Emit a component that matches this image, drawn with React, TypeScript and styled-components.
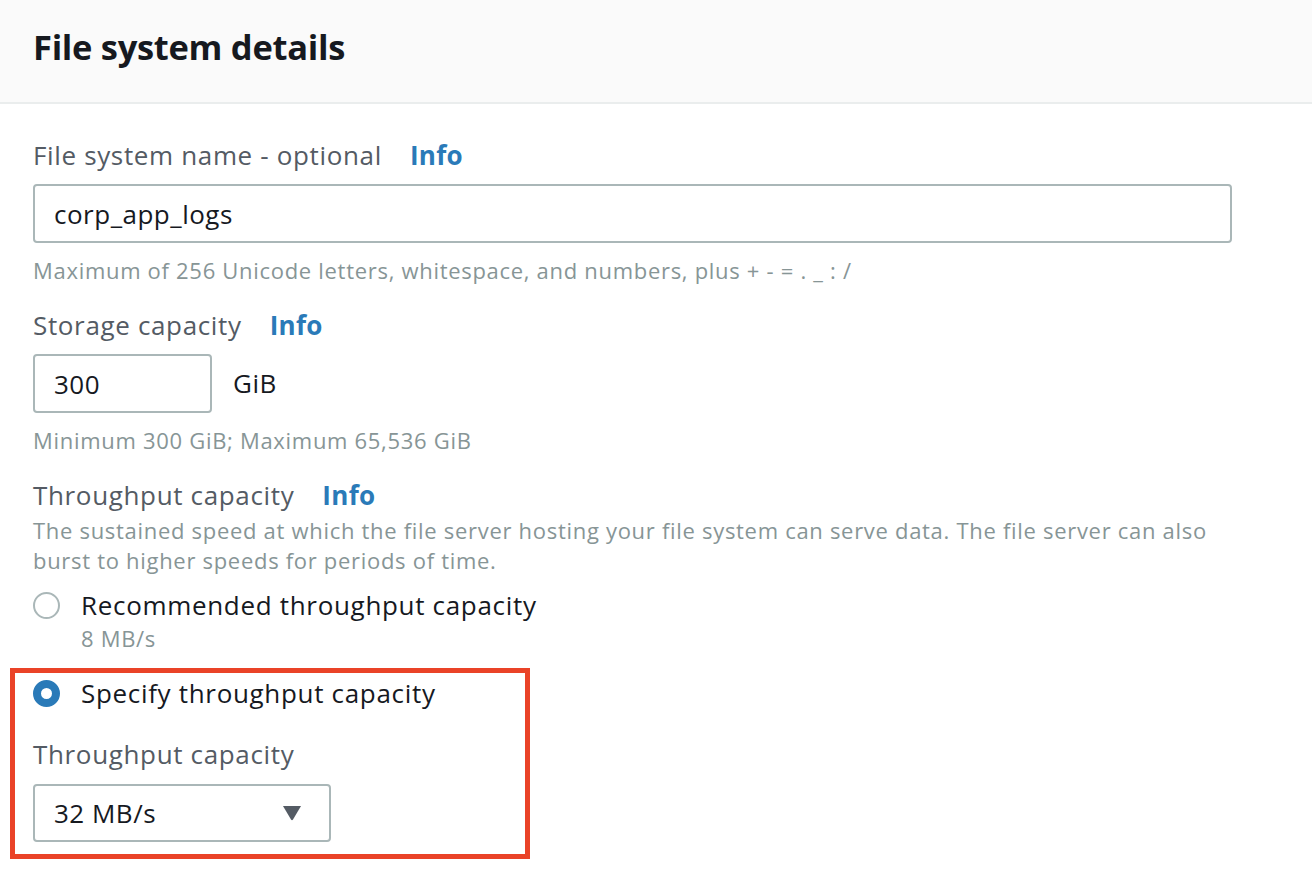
import React from "react";
import styled, { createGlobalStyle } from "styled-components";

const Global = createGlobalStyle`
  html, body { margin: 0; padding: 0; background: #ffffff; }
  body { font-family: "Open Sans", "Noto Sans", sans-serif; color: #16191f; }
  * { box-sizing: border-box; }
`;

const Page = styled.div`
  width: 1312px;
  height: 896px;
  overflow: hidden;
  background: #ffffff;
`;

const Header = styled.div`
  height: 104px;
  background: #fafafa;
  border-bottom: 2px solid #eaeded;
  padding: 0 33px 10px;
  display: flex;
  align-items: center;
`;

const Title = styled.h2`
  margin: 0;
  font-size: 34.5px;
  font-weight: 700;
  color: #16191f;
  letter-spacing: -0.3px;
`;

const Body = styled.div`
  padding: 33px 33px 0;
  display: flex;
  flex-direction: column;
`;

const Label = styled.div<{ $mt?: number }>`
  display: flex;
  align-items: center;
  gap: 28px;
  margin-top: ${(p) => p.$mt ?? 0}px;
  font-size: 26px;
  line-height: 36px;
  letter-spacing: 0.65px;
  color: #545b64;
`;

const InfoLink = styled.a`
  color: #2a7ab8;
  font-weight: 700;
  letter-spacing: 0.3px;
  text-decoration: none;
`;

const TextInput = styled.div<{ $w: number }>`
  margin-top: 11px;
  width: ${(p) => p.$w}px;
  height: 59px;
  border: 2px solid #aab7b8;
  border-radius: 4px;
  padding: 0 19px;
  display: flex;
  align-items: center;
  font-size: 26px;
  letter-spacing: 0.5px;
  color: #16191f;
  background: #fff;
`;

const InputRow = styled.div`
  display: flex;
  align-items: flex-end;
  gap: 21px;
`;

const Unit = styled.span`
  font-size: 26px;
  line-height: 59px;
  letter-spacing: 0.5px;
  color: #16191f;
`;

const Hint = styled.div<{ $mt?: number }>`
  margin-top: ${(p) => p.$mt ?? 12}px;
  font-size: 22px;
  line-height: 30px;
  letter-spacing: 0.7px;
  color: #879596;
`;

const RadioRow = styled.div<{ $mt?: number }>`
  display: flex;
  align-items: center;
  gap: 21px;
  margin-top: ${(p) => p.$mt ?? 0}px;
  font-size: 26px;
  line-height: 36px;
  letter-spacing: 0.68px;
  color: #16191f;
`;

const RadioDot = styled.span<{ $checked?: boolean }>`
  width: 27px;
  height: 27px;
  border-radius: 50%;
  flex: none;
  background: #fff;
  border: ${(p) => (p.$checked ? "8.5px solid #2a7ab8" : "2px solid #aab7b8")};
`;

const SubText = styled.div`
  padding-left: 48px;
  font-size: 22px;
  line-height: 30px;
  letter-spacing: 0.7px;
  color: #879596;
`;

const Highlight = styled.div`
  margin: 15px 0 0 -23px;
  width: 520px;
  border: 5px solid #ea4328;
  padding: 2px 0 12px 18px;
  display: flex;
  flex-direction: column;
`;

const Select = styled.div`
  margin-top: 12px;
  width: 298px;
  height: 58px;
  border: 2px solid #aab7b8;
  border-radius: 4px;
  padding: 0 27px 0 19px;
  display: flex;
  align-items: center;
  justify-content: space-between;
  font-size: 26px;
  letter-spacing: 0.5px;
  color: #16191f;
`;

const Caret = () => (
  <svg width="20" height="16" viewBox="0 0 20 16">
    <path d="M1 1 H19 L11 14.5 Q10 16 9 14.5 Z" fill="#545b64" />
  </svg>
);

export default function App() {
  return (
    <Page>
      <Global />
      <Header>
        <Title>File system details</Title>
      </Header>
      <Body>
        <Label>
          File system name - optional <InfoLink>Info</InfoLink>
        </Label>
        <TextInput $w={1199}>corp_app_logs</TextInput>
        <Hint>Maximum of 256 Unicode letters, whitespace, and numbers, plus + - = . _ : /</Hint>

        <Label $mt={22}>
          Storage capacity <InfoLink>Info</InfoLink>
        </Label>
        <InputRow>
          <TextInput $w={179}>300</TextInput>
          <Unit>GiB</Unit>
        </InputRow>
        <Hint>Minimum 300 GiB; Maximum 65,536 GiB</Hint>

        <Label $mt={22}>
          Throughput capacity <InfoLink>Info</InfoLink>
        </Label>
        <Hint $mt={2}>
          The sustained speed at which the file server hosting your file system can serve data. The file server can also
          <br />
          burst to higher speeds for periods of time.
        </Hint>

        <RadioRow $mt={12}>
          <RadioDot />
          Recommended throughput capacity
        </RadioRow>
        <SubText>8 MB/s</SubText>

        <Highlight>
          <RadioRow>
            <RadioDot $checked />
            Specify throughput capacity
          </RadioRow>
          <Label $mt={25}>Throughput capacity</Label>
          <Select>
            <span>32 MB/s</span>
            <Caret />
          </Select>
        </Highlight>
      </Body>
    </Page>
  );
}
